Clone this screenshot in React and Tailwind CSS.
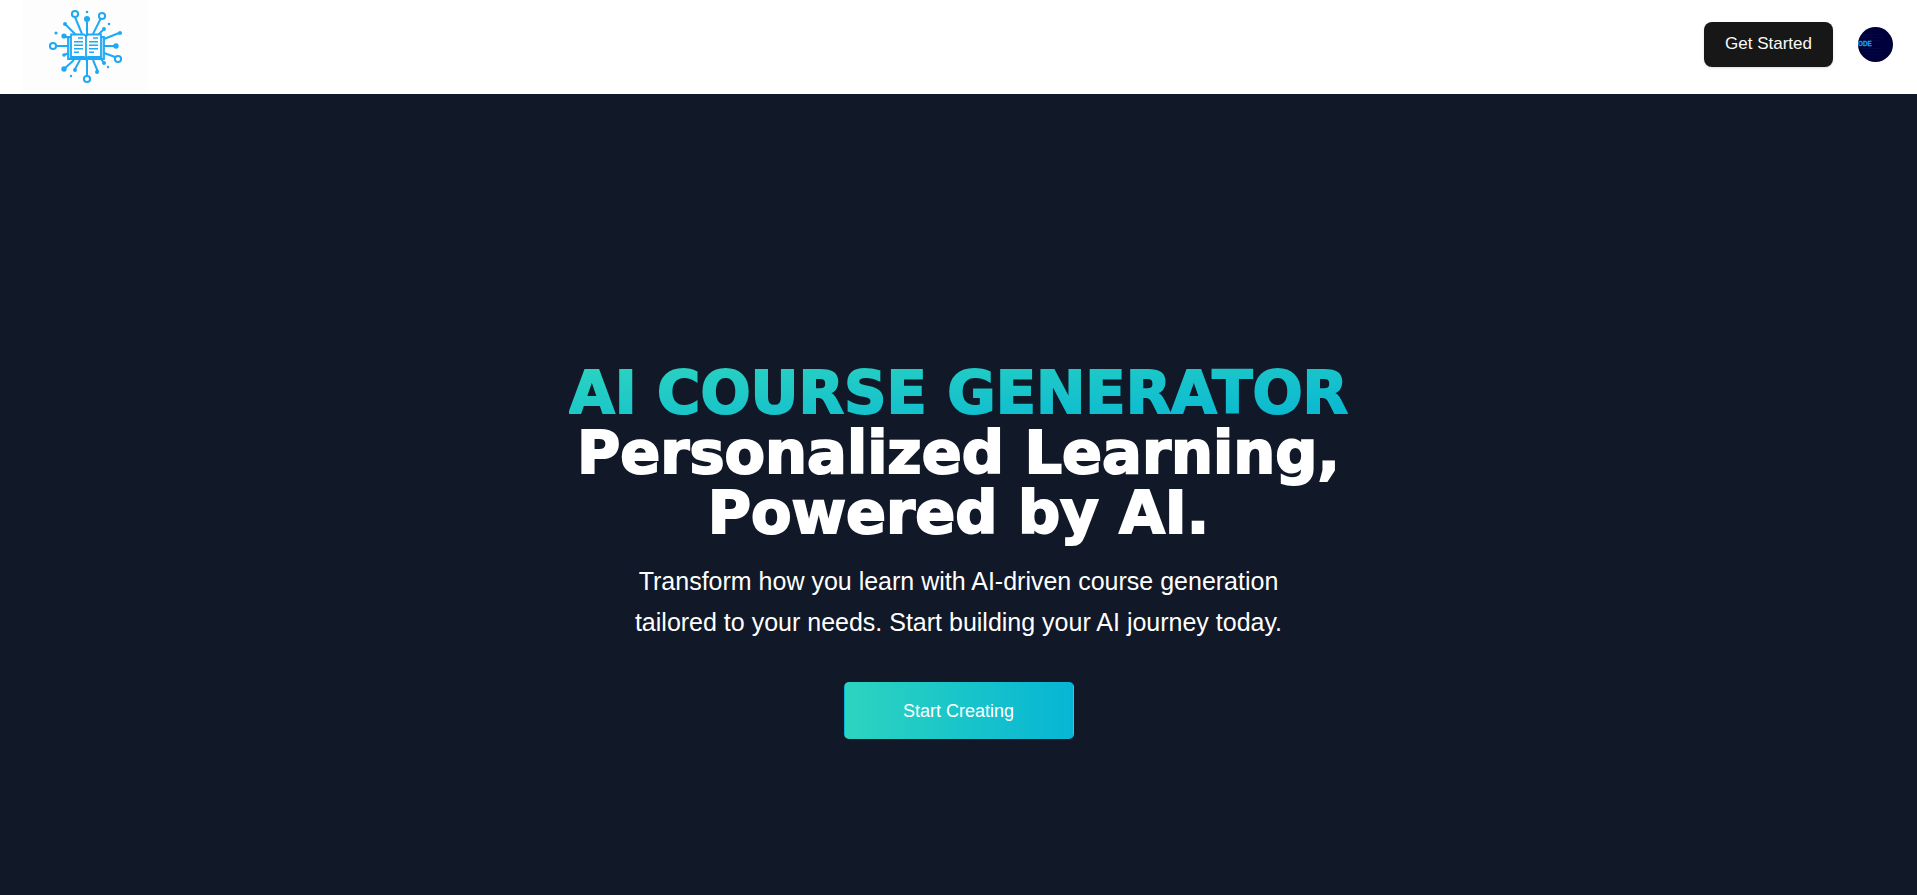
function Logo() {
  const rays = [
    [75, 17, 82, 34],
    [87, 22, 87, 36],
    [101, 18, 93, 34],
    [65, 24, 76, 35],
    [103, 30, 98, 35],
    [119, 33, 104, 39],
    [56, 46, 68, 46],
    [104, 46, 114, 46],
    [64, 36, 69, 38],
    [64, 55, 69, 53],
    [64, 69, 74, 60],
    [75, 69, 80, 60],
    [87, 58, 87, 76],
    [93, 60, 98, 72],
    [101, 59, 104, 63],
    [104, 53, 115, 57],
  ];
  const rings = [[75, 14], [102, 16], [53, 46], [118, 59], [87, 79]];
  const dots = [
    [87, 19, 3], [65, 24, 2], [104, 29, 2], [120, 33, 2], [64, 36, 2.6],
    [116, 46, 2.7], [64, 55, 1.8], [64, 69, 2.7], [75, 70, 2], [97, 72, 2],
    [104, 63, 2], [87, 12, 1.3], [109, 24, 1.3], [56, 33, 1.6], [108, 67, 1.2], [71, 76, 1.2],
  ];
  return (
    <svg viewBox="23 0 125 94" className="h-full w-full" fill="none" stroke="#1fa9f4" role="img" aria-label="AI Course Generator">
      <g strokeWidth="2">
        {rays.map(([a, b, c, d], i) => <line key={i} x1={a} y1={b} x2={c} y2={d} />)}
      </g>
      <g strokeWidth="2" fill="#fdfdfd">
        {rings.map(([x, y], i) => <circle key={i} cx={x} cy={y} r="3.1" />)}
      </g>
      <g fill="#1fa9f4" stroke="none">
        {dots.map(([x, y, r], i) => <circle key={i} cx={x} cy={y} r={r} />)}
      </g>
      <path d="M68 37v22h17l1.500 1 1.500-1h16V37z" fill="#9fdcfb" strokeWidth="1.8" />
      <path d="M71 34.500h13l2 1.500 2-1.500h13V57H88l-2 1.500-2-1.500H71z" fill="#fdfdfd" strokeWidth="1.800" />
      <path d="M86 36v22" strokeWidth="1.800" />
      <path d="M78 38h5M74 41.700h9M74 45.300h9M74 48.700h9M74 52.200h5M93 38h5M89 41.700h9M89 45.300h9M89 48.700h9M89 52.200h5" strokeWidth="1.600" />
    </svg>
  );
}

function Avatar() {
  return (
    <svg viewBox="0 0 36 36" className="h-full w-full" aria-hidden="true">
      <rect width="36" height="36" fill="#00003a" />
      <path d="M4 8h22M6 11h20M3 14h20M3 22h22M5 25h22M8 28h16" stroke="#04145a" strokeWidth="1" opacity=".5" />
      <text x="0" y="20" fontSize="6.5" fontWeight="700" fontFamily="Liberation Sans, sans-serif" fill="#16a0f0" stroke="#16a0f0" strokeWidth=".3">ODE</text>
    </svg>
  );
}

export default function App() {
  return (
    <div className="flex min-h-screen flex-col bg-[#111827] font-['Liberation_Sans',Arial,sans-serif]">
      <header className="flex h-[94px] items-center justify-between bg-white pr-6 pl-[23px]">
        <a href="#" className="block h-[94px] w-[125px] bg-[#fdfdfd]">
          <Logo />
        </a>
        <div className="flex items-center gap-[25px] pb-1.5">
          <button type="button" className="h-[45px] rounded-lg bg-[#171717] px-[21px] text-[17px] text-neutral-50 shadow-sm">
            Get Started
          </button>
          <button type="button" aria-label="Account" className="size-[35px] overflow-hidden rounded-full">
            <Avatar />
          </button>
        </div>
      </header>
      <main className="flex flex-1 flex-col items-center px-4 pt-[269px] text-center text-white">
        <h1 className="font-['Arial_Black','DejaVu_Sans',sans-serif] text-[59px] leading-[60px] font-black [-webkit-text-stroke-width:2px]">
          <span className="block bg-[linear-gradient(to_bottom_right,#2dd4bf,#06b6d4)] bg-clip-text text-transparent">AI COURSE GENERATOR</span>
          <span className="block">Personalized Learning,</span>
          <span className="block">Powered by AI.</span>
        </h1>
        <p className="mt-[18px] max-w-[672px] text-[25px] leading-[41px]">
          Transform how you learn with AI-driven course generation tailored to your needs. Start building your AI journey today.
        </p>
        <button type="button" className="mt-[39px] h-[57px] w-[230px] rounded-[5px] border border-transparent bg-[linear-gradient(to_right,#2dd4bf,#06b6d4)] text-lg">
          Start Creating
        </button>
      </main>
    </div>
  );
}
